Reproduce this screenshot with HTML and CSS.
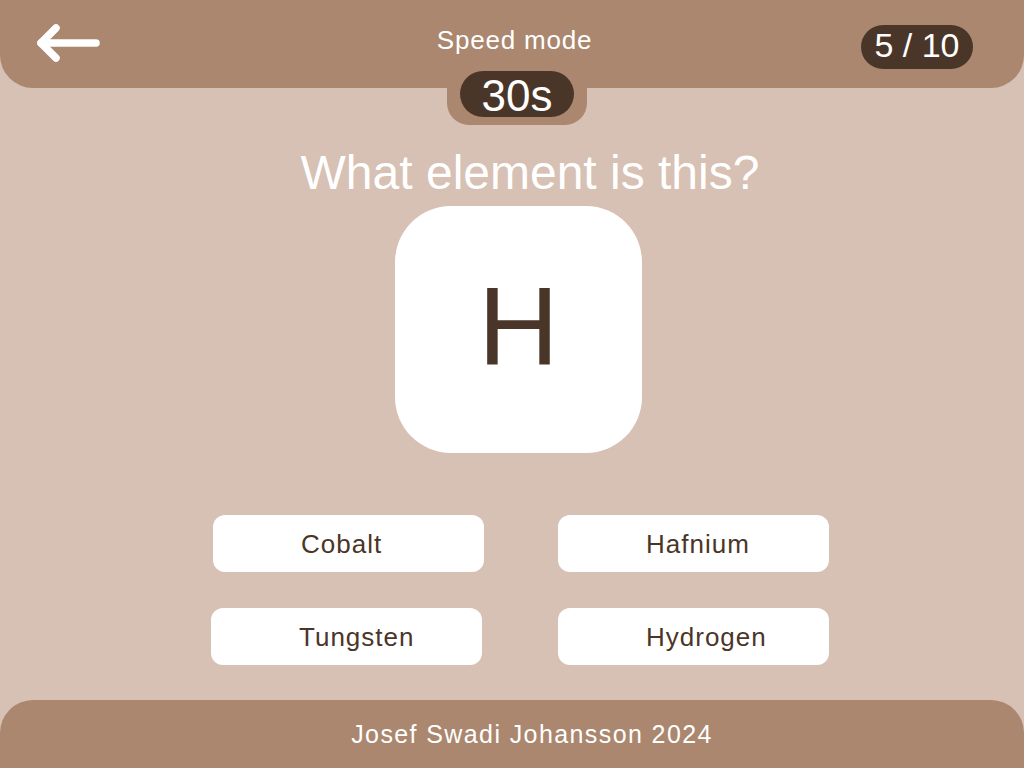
FILE: index.html
```html
<!DOCTYPE html>
<html lang="en">
<head>
<meta charset="utf-8">
<title>Speed mode</title>
<link rel="stylesheet" href="styles.css">
</head>
<body>
<div class="page">
  <header class="topbar">
    <button class="back" aria-label="Back">
      <svg width="66" height="40" viewBox="0 0 66 40" fill="none" stroke="#ffffff" stroke-width="7.5" stroke-linecap="round" stroke-linejoin="round">
        <path d="M60 20 H5"/>
        <path d="M20 5 L5 20 L20 35"/>
      </svg>
    </button>
    <h1 class="title">Speed mode</h1>
    <div class="counter-wrap"><span class="counter">5 / 10</span></div>
    <div class="timer-tab"><span class="timer">30s</span></div>
  </header>

  <main class="main">
    <h2 class="question">What element is this?</h2>
    <div class="card"><span class="symbol">H</span></div>
    <div class="answers">
      <button class="answer">Cobalt</button>
      <button class="answer">Hafnium</button>
      <button class="answer shift">Tungsten</button>
      <button class="answer">Hydrogen</button>
    </div>
  </main>

  <footer class="footer">Josef Swadi Johansson 2024</footer>
</div>
</body>
</html>
```

FILE: styles.css
```css
* { box-sizing: border-box; }

html, body {
  margin: 0;
  padding: 0;
}

body {
  background: #d7c0b4;
  font-family: "Liberation Sans", Arial, sans-serif;
  color: #ffffff;
}

.page {
  min-height: 100vh;
  display: flex;
  flex-direction: column;
}

.topbar {
  position: relative;
  height: 88px;
  background: #aa876e;
  border-radius: 0 0 33px 33px;
  display: grid;
  grid-template-columns: 1fr auto 1fr;
  align-items: start;
  padding: 0 51px 0 56px;
}

.back {
  justify-self: start;
  margin: 23px 0 0 -20px;
  padding: 0;
  border: 0;
  background: none;
  width: 66px;
  height: 40px;
  cursor: pointer;
}

.back svg { display: block; }

.title {
  margin: 25px 0 0;
  font-weight: normal;
  font-size: 26px;
  line-height: 30px;
  letter-spacing: 0.8px;
}

.counter-wrap {
  justify-self: end;
  margin-top: 25px;
}

.counter {
  display: block;
  width: 112px;
  height: 44px;
  border-radius: 22px;
  background: #4a3628;
  text-align: center;
  font-size: 34px;
  line-height: 40px;
  padding-bottom: 4px;
}

.timer-tab {
  position: absolute;
  top: 60px;
  left: calc(50% + 5px);
  transform: translateX(-50%);
  background: #aa876e;
  padding: 11px 13px 8px;
  border-radius: 0 0 22px 22px;
}

.timer {
  display: block;
  width: 114px;
  height: 46px;
  border-radius: 23px;
  background: #4a3628;
  text-align: center;
  font-size: 44px;
  line-height: 42px;
  padding-top: 4px;
}

.main {
  display: flex;
  flex-direction: column;
  align-items: center;
}

.question {
  margin: 57px 0 0 36px;
  font-weight: normal;
  font-size: 48px;
  line-height: 56px;
}

.card {
  margin: 5px 0 0 13px;
  width: 247px;
  height: 247px;
  background: #ffffff;
  border-radius: 56px;
  display: flex;
  align-items: center;
  justify-content: center;
  padding-bottom: 7px;
}

.symbol {
  color: #4a3628;
  font-size: 112px;
}

.answers {
  margin: 62px 0 0 18px;
  display: grid;
  grid-template-columns: 271px 271px;
  column-gap: 74px;
  row-gap: 36px;
}

.answer {
  width: 271px;
  height: 57px;
  border: 0;
  border-radius: 12px;
  background: #ffffff;
  color: #4a3628;
  font-family: "Liberation Sans", Arial, sans-serif;
  font-size: 26px;
  letter-spacing: 1px;
  line-height: 55px;
  text-align: left;
  padding: 2px 0 0 88px;
  cursor: pointer;
}

.answer.shift {
  justify-self: start;
  margin-left: -2px;
}

.footer {
  margin-top: auto;
  height: 68px;
  background: #aa876e;
  border-radius: 33px 33px 0 0;
  text-align: center;
  font-size: 25px;
  letter-spacing: 1.4px;
  line-height: 26px;
  padding: 21px 0 0 40px;
}
```
